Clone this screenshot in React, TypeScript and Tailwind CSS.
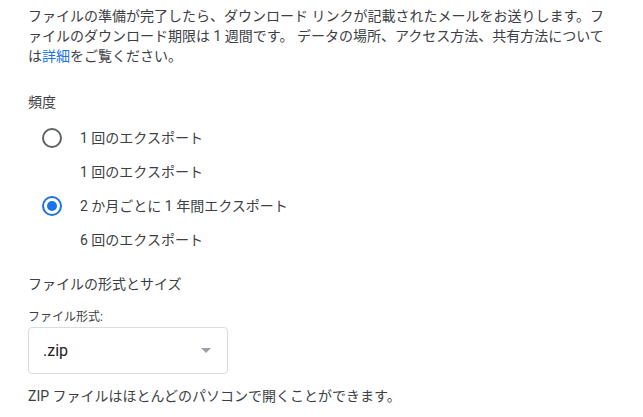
import React from "react";

const font = { fontFamily: "Roboto, 'Noto Sans CJK JP', sans-serif" };

const Radio: React.FC<{ checked?: boolean }> = ({ checked }) => (
  <span
    className={`flex h-5 w-5 items-center justify-center rounded-full border-2 ${
      checked ? "border-[#1a73e8]" : "border-[#5f6368]"
    }`}
  >
    {checked && <span className="h-2.5 w-2.5 rounded-full bg-[#1a73e8]" />}
  </span>
);

const App: React.FC = () => {
  return (
    <div className="h-[417px] w-[643px] overflow-hidden bg-white pl-[28px] text-[#3c4043]" style={font}>
      <p className="w-[578px] pt-[6px] text-[14px] leading-[20px]">
        ファイルの準備が完了したら、ダウンロード リンクが記載されたメールをお送りします。ファイルのダウンロード期限は 1 週間です。 データの場所、アクセス方法、共有方法については
        <a className="text-[#1a73e8]">詳細</a>をご覧ください。
      </p>

      <div className="mt-[26px] text-[14px] leading-[20px]">頻度</div>

      <div className="mt-[9px] flex flex-col text-[14px]">
        <div className="flex h-[34px] items-center">
          <span className="ml-[14px] mr-[18px]">
            <Radio />
          </span>
          <span>1 回のエクスポート</span>
        </div>
        <div className="flex h-[34px] items-center pl-[52px]">1 回のエクスポート</div>
        <div className="flex h-[34px] items-center">
          <span className="ml-[14px] mr-[18px]">
            <Radio checked />
          </span>
          <span>2 か月ごとに 1 年間エクスポート</span>
        </div>
        <div className="flex h-[34px] items-center pl-[52px]">6 回のエクスポート</div>
      </div>

      <div className="mt-[17px] text-[14px] leading-[20px]">ファイルの形式とサイズ</div>

      <div className="mt-[16px] text-[12px] leading-[14px]">ファイル形式:</div>

      <div className="mt-[3px] flex h-[47px] w-[200px] items-center justify-between rounded border border-[#dadce0] pl-[14px] pr-[16px]">
        <span className="text-[16px] text-[#202124]">.zip</span>
        <svg width="10" height="5" viewBox="0 0 10 5">
          <path d="M0 0 L5 5 L10 0 Z" fill="#9aa0a6" />
        </svg>
      </div>

      <p className="mt-[12px] text-[14px] leading-[20px]">ZIP ファイルはほとんどのパソコンで開くことができます。</p>
    </div>
  );
};

export default App;
